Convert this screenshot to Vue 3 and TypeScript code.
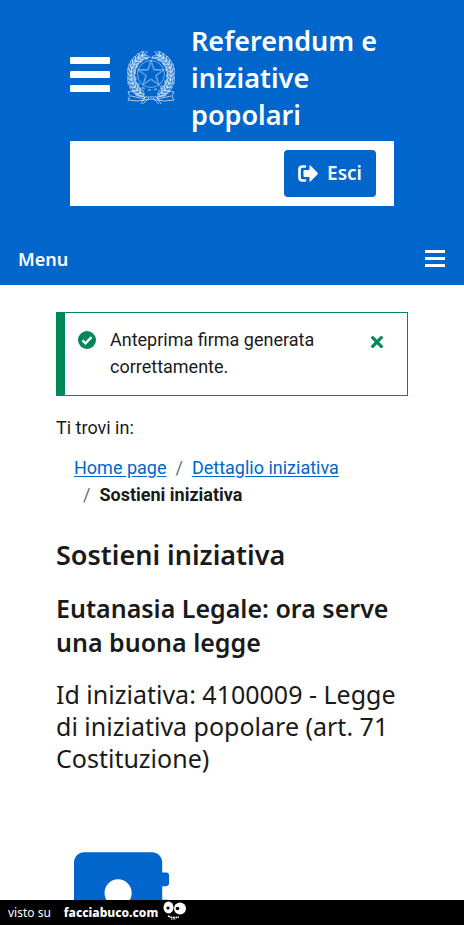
<script setup lang="ts">
interface Crumb {
  label: string
  href?: string
}

const crumbs: Crumb[] = [
  { label: 'Home page', href: '#home' },
  { label: 'Dettaglio iniziativa', href: '#dettaglio' },
  { label: 'Sostieni iniziativa' },
]

const starPoints = (cx: number, cy: number, outer: number, inner: number): string =>
  Array.from({ length: 10 }, (_, i) => {
    const r = i % 2 === 0 ? outer : inner
    const a = (Math.PI * i) / 5 - Math.PI / 2
    return `${(cx + r * Math.cos(a)).toFixed(2)},${(cy + r * Math.sin(a)).toFixed(2)}`
  }).join(' ')

const outerStar = starPoints(24, 23, 14, 5.6)
const innerStar = starPoints(24, 23, 11, 4.4)

// Leaves of the left branch, from the base of the wreath up to its tip.
const leaves = Array.from({ length: 13 }, (_, i) => {
  const a = ((118 + i * 11) * Math.PI) / 180
  return {
    x: 24 + 20 * Math.cos(a),
    y: 24 + 21 * Math.sin(a),
    turn: 118 + i * 11 + 90,
  }
})
</script>

<template>
  <div class="page">
    <header class="header">
      <div class="brand">
        <button class="icon-button burger" type="button" aria-label="Apri navigazione">
          <svg viewBox="0 0 40 36" width="40" height="36" aria-hidden="true">
            <path d="M1 0h38q1 0 1 1v5q0 1-1 1H1q-1 0-1-1V1q0-1 1-1zM1 14h38q1 0 1 1v5q0 1-1 1H1q-1 0-1-1v-5q0-1 1-1zM1 28h38q1 0 1 1v5q0 1-1 1H1q-1 0-1-1v-5q0-1 1-1z" fill="#fff" />
          </svg>
        </button>
        <svg class="emblem" viewBox="0 0 48 54" width="48" height="54" aria-hidden="true">
          <g fill="none" stroke="#fff" stroke-opacity=".65" stroke-width=".7">
            <circle cx="24" cy="23" r="13.500" />
            <circle cx="24" cy="23" r="16" stroke-width="2" stroke-dasharray="3 3.280" stroke-opacity=".4" />
            <polygon :points="outerStar" />
            <polygon :points="innerStar" stroke-opacity=".35" />
            <g v-for="side in [1, -1]" :key="side" :transform="side === 1 ? undefined : 'translate(48 0) scale(-1 1)'">
              <path d="M19 47C5 43-1 30 3 17 6 8 12 4 19 3" />
              <g v-for="(leaf, i) in leaves" :key="i" :transform="`translate(${leaf.x} ${leaf.y}) rotate(${leaf.turn})`">
                <path d="M-3 0Q0-5 5-4Q4 0-3 0zM-3 0Q0 5 5 4Q3 0-3 0z" fill="#fff" fill-opacity=".12" />
              </g>
              <path d="M1 41l5-1 4 4 8 2 6 0M1 41l2 4-2 4 9 1 8-1 6-1M18 46l-4 7M22 47l-6 6M4 45l14 3" stroke-width="1" />
            </g>
          </g>
        </svg>
        <div class="title">Referendum e iniziative popolari</div>
      </div>
      <div class="session">
        <button class="exit" type="button">
          <svg viewBox="0 0 20 17" width="20" height="17" aria-hidden="true">
            <path d="M7 1.500H4.500q-3 0-3 3v8q0 3 3 3H7" fill="none" stroke="#fff" stroke-width="2.600" stroke-linecap="round" />
            <path d="M11.500 1.300q0-1.600 1.200-.5l6.700 6.700q1 1 0 2l-6.700 6.700q-1.200 1.100-1.200-.5V12H6.500q-1 0-1-1V6q0-1 1-1h5z" fill="#fff" />
          </svg>
          <span>Esci</span>
        </button>
      </div>
      <nav class="menu-bar" aria-label="Principale">
        <span>Menu</span>
        <button class="icon-button" type="button" aria-label="Apri menu">
          <svg viewBox="0 0 20 20" width="20" height="20" aria-hidden="true">
            <path d="M0 0h20v3H0zM0 7h20v3H0zM0 14h20v3H0z" fill="#fff" />
          </svg>
        </button>
      </nav>
    </header>

    <main class="content">
      <div class="alert" role="status">
        <svg class="alert-icon" viewBox="0 0 18 18" width="18" height="18" aria-hidden="true">
          <circle cx="9" cy="9" r="9" fill="#008758" />
          <path d="M4.500 9.300l3 3 6-6.200" fill="none" stroke="#fff" stroke-width="2.400" />
        </svg>
        <p>Anteprima firma generata correttamente.</p>
        <button class="icon-button close" type="button" aria-label="Chiudi">
          <svg viewBox="0 0 12 12" width="12" height="12" aria-hidden="true">
            <path d="M1.700 1.700l8.600 8.600M10.300 1.700l-8.600 8.600" stroke="#008758" stroke-width="3.200" stroke-linecap="round" />
          </svg>
        </button>
      </div>

      <p class="location">Ti trovi in:</p>
      <nav aria-label="Percorso">
        <ol class="crumbs">
          <li v-for="crumb in crumbs" :key="crumb.label">
            <a v-if="crumb.href" :href="crumb.href">{{ crumb.label }}</a>
            <strong v-else aria-current="page">{{ crumb.label }}</strong>
          </li>
        </ol>
      </nav>

      <h1>Sostieni iniziativa</h1>
      <h2>Eutanasia Legale: ora serve una buona legge</h2>
      <p class="detail">Id iniziativa: 4100009 - Legge di iniziativa popolare (art. 71 Costituzione)</p>

      <svg class="contact" viewBox="0 0 448 512" width="95" height="109" aria-hidden="true">
        <path fill="#06c" d="M436 160c6.600 0 12-5.400 12-12v-40c0-6.600-5.400-12-12-12h-20V48c0-26.500-21.500-48-48-48H48C21.500 0 0 21.500 0 48v416c0 26.500 21.500 48 48 48h320c26.500 0 48-21.500 48-48v-48h20c6.600 0 12-5.400 12-12v-40c0-6.600-5.400-12-12-12h-20v-64h20c6.600 0 12-5.400 12-12v-40c0-6.600-5.400-12-12-12h-20v-64h20zm-228-32c35.300 0 64 28.700 64 64s-28.700 64-64 64-64-28.700-64-64 28.700-64 64-64zm112 236.800c0 10.600-10 19.200-22.400 19.200H118.400C106 384 96 375.400 96 364.800v-19.200c0-31.800 30.100-57.600 67.200-57.600h5c12.300 5.100 25.700 8 39.800 8s27.600-2.900 39.800-8h5c37.100 0 67.200 25.800 67.200 57.600v19.200z" />
      </svg>
    </main>

    <footer class="credit">
      <span>visto su</span>
      <strong>facciabuco.com</strong>
      <svg viewBox="0 0 24 20" width="24" height="20" aria-hidden="true">
        <ellipse cx="5.500" cy="6.500" rx="5" ry="6" fill="#fff" />
        <ellipse cx="17" cy="7.500" rx="6" ry="6" fill="#fff" />
        <circle cx="5" cy="7" r="1.600" fill="#000" />
        <circle cx="14.500" cy="7.500" r="1.800" fill="#000" />
        <path d="M5 15q5 2.500 11 1" fill="none" stroke="#fff" stroke-width="1.500" stroke-dasharray="2 .6" />
        <path d="M8 18h5" stroke="#fff" stroke-width="1.200" stroke-dasharray="1.500 .8" />
      </svg>
    </footer>
  </div>
</template>

<style>
body {
  margin: 0;
}
</style>

<style scoped>
.page {
  display: flex;
  flex-direction: column;
  height: 100vh;
  overflow: hidden;
  background: #fff;
  color: #1a1a1a;
  font-family: Roboto, "Liberation Sans", sans-serif;
  font-size: 18px;
  line-height: 27px;
}

.header,
h1,
h2,
.detail {
  font-family: "Noto Sans", "Open Sans", sans-serif;
}

.header {
  flex: none;
  background: #06c;
  color: #fff;
  padding-top: 22px;
}

.brand {
  display: flex;
  align-items: center;
  padding: 0 70px;
}

.icon-button {
  display: block;
  flex: none;
  border: 0;
  padding: 0;
  background: none;
  line-height: 0;
  cursor: pointer;
}

.burger {
  margin: 0 17px 6px 0;
}

.emblem {
  flex: none;
  margin-right: 16px;
}

.title {
  flex: 1;
  font-size: 27px;
  font-weight: 600;
  line-height: 37px;
}

.session {
  display: flex;
  justify-content: flex-end;
  margin: 8px 70px 0;
  padding: 9px 18px;
  background: #fff;
}

.exit {
  display: flex;
  align-items: center;
  justify-content: center;
  gap: 9px;
  height: 47px;
  padding: 0 14px;
  border: 0;
  border-radius: 4px;
  background: #06c;
  color: #fff;
  font: inherit;
  font-size: 19px;
  font-weight: 600;
  cursor: pointer;
}

.menu-bar {
  display: flex;
  align-items: center;
  justify-content: space-between;
  margin-top: 28px;
  padding: 12px 19px 12px 18px;
  font-weight: 600;
}

.content {
  flex: 1;
  min-height: 0;
  overflow: hidden;
  padding: 27px 56px 0;
}

p,
h1,
h2 {
  margin: 0;
}

.alert {
  display: flex;
  align-items: flex-start;
  padding: 13px 24px 15px 13px;
  border: 1px solid #008758;
  border-left-width: 9px;
}

.alert p {
  flex: 1;
  padding: 0 40px 0 14px;
}

.alert-icon {
  flex: none;
  margin-top: 5px;
}

.close {
  margin-top: 10px;
}

.location {
  margin-top: 18px;
}

.crumbs {
  display: flex;
  flex-wrap: wrap;
  margin: 13px 0 0;
  padding: 0 18px;
  list-style: none;
}

.crumbs li + li::before {
  content: "/";
  padding: 0 9px;
  color: #5c6f82;
}

.crumbs a {
  color: #06c;
  text-underline-offset: 2px;
}

.crumbs strong {
  font-weight: 700;
}

h1 {
  margin-top: 29px;
  font-size: 27px;
  font-weight: 600;
  line-height: 36px;
}

h2 {
  margin-top: 18px;
  font-size: 25px;
  font-weight: 600;
  line-height: 34px;
}

.detail {
  margin-top: 19px;
  font-size: 25px;
  font-weight: 400;
  line-height: 32px;
}

.contact {
  display: block;
  margin: 78px 18px 0;
}

.credit {
  display: flex;
  flex: none;
  align-items: center;
  height: 25px;
  padding-left: 8px;
  background: #000;
  color: #fff;
  font-family: "Noto Sans", sans-serif;
  font-size: 12px;
  line-height: 25px;
}

.credit strong {
  margin: 0 5px 0 13px;
  font-weight: 800;
}

.credit svg {
  margin-bottom: 3px;
}
</style>
